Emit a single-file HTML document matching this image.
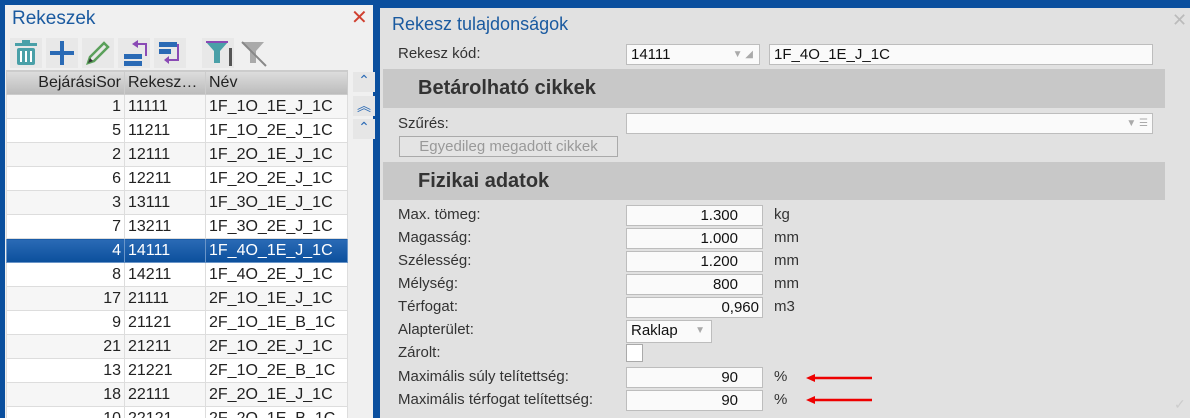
<!DOCTYPE html>
<html><head><meta charset="utf-8"><style>
*{margin:0;padding:0;box-sizing:border-box}
html,body{width:1190px;height:418px;overflow:hidden}
body{background:#0a4f9e;font-family:"Liberation Sans",sans-serif;position:relative}
.abs{position:absolute}
#left{left:5px;top:5px;width:368px;height:413px;background:#f0f0f0}
table{border-collapse:collapse;position:absolute;left:6px;top:70px;width:342px;font-size:16px;color:#222;table-layout:fixed}
td{height:24px;border:1px solid #ddd;padding:0 3px;white-space:nowrap;overflow:hidden}
tr:nth-child(even) td{background:#f6f6f6}
tr:nth-child(odd) td{background:#fff}
tr.h td{background:linear-gradient(#ddd,#bbb);border-color:#ccc}
tr.sel td{background:linear-gradient(#2a6ab5,#0b4f9c);color:#fff;border-color:#6a95c8}
td.n{text-align:right}
#dlg{left:380px;top:8px;width:810px;height:410px;background:#e1e1e1}
.band{position:absolute;left:3px;width:782px;background:#c8c8c8;font-weight:bold;font-size:20px;color:#333;padding-left:35px;font-family:"Liberation Sans",sans-serif}
.inp{position:absolute;background:#fafafa;border:1px solid #bdbdbd;font-size:15px;color:#111;height:21px;line-height:19px;padding:0 4px}
.lab{position:absolute;left:18px;font-size:15px;color:#333}
.unit{position:absolute;left:394px;font-size:15px;color:#333}
.sb{position:absolute;left:348px;width:22px;height:20px;background:#e6e6e6;color:#2a6ab5;font-size:14px;text-align:center}
</style></head><body>
<div class="abs" style="left:380px;top:0;width:810px;height:8px;background:#0a4f9e"></div>
<div id="left" class="abs">
<div class="abs" style="left:7px;top:3px;font-size:19px;color:#1a5aa0">Rekeszek</div>
<div class="abs" style="left:346px;top:0;font-size:20px;color:#d04030">✕</div>
<svg class="abs" style="left:5px;top:33px" width="260" height="30">
<rect x="0" y="0" width="32" height="30" fill="#e8e8e8"/><rect x="36" y="0" width="32" height="30" fill="#e8e8e8"/><rect x="72" y="0" width="32" height="30" fill="#e8e8e8"/><rect x="108" y="0" width="32" height="30" fill="#e8e8e8"/><rect x="144" y="0" width="32" height="30" fill="#e8e8e8"/><rect x="192" y="0" width="32" height="30" fill="#e8e8e8"/>
<g fill="#4aa0a8"><rect x="5" y="5" width="22" height="3"/><rect x="12" y="2" width="8" height="3"/><rect x="7" y="10" width="18" height="17" rx="2"/></g>
<g fill="#fff"><rect x="10" y="13" width="2" height="11"/><rect x="15" y="13" width="2" height="11"/><rect x="20" y="13" width="2" height="11"/></g>
<rect x="40" y="13" width="24" height="4" fill="#2a6ab5"/><rect x="50" y="3" width="4" height="24" fill="#2a6ab5"/>
<path d="M78 25 L80 19 L94 5 L98 9 L84 23 Z" fill="none" stroke="#5aa05a" stroke-width="2.5"/><path d="M78 25 L80 20 L83 23Z" fill="#333"/>
<rect x="114" y="16" width="18" height="5" fill="#2a6ab5"/><rect x="114" y="23" width="18" height="5" fill="#2a6ab5"/><path d="M128 6 h8 v12" stroke="#8a4ab5" stroke-width="2" fill="none"/><path d="M122 6 l6 -4 v8z" fill="#8a4ab5"/>
<rect x="149" y="4" width="18" height="5" fill="#2a6ab5"/><rect x="149" y="11" width="12" height="5" fill="#2a6ab5"/><path d="M168 6 v16 h-10" stroke="#8a4ab5" stroke-width="2" fill="none"/><path d="M154 22 l5 -4 v8z" fill="#8a4ab5"/>
<path d="M196 4 h22 l-8 9 v12 h-6 v-12z" fill="#4aa0a8"/><rect x="196" y="3" width="22" height="2" fill="#8a4ab5"/><rect x="219" y="10" width="3" height="18" fill="#555"/>
<path d="M232 4 h22 l-8 9 v12 h-6 v-12z" fill="#aaa"/><path d="M232 4 L256 28" stroke="#888" stroke-width="2"/>
</svg>
<div class="sb" style="top:67px">⌃</div><div class="sb" style="top:91px">︽</div><div class="sb" style="top:114px">⌃</div>
</div>
<table>
<colgroup><col style="width:118px"><col style="width:81px"><col></colgroup>
<tr class="h"><td class="n">BejárásiSor</td><td>Rekesz…</td><td>Név</td></tr>
<tr><td class="n">1</td><td>11111</td><td>1F_1O_1E_J_1C</td></tr>
<tr><td class="n">5</td><td>11211</td><td>1F_1O_2E_J_1C</td></tr>
<tr><td class="n">2</td><td>12111</td><td>1F_2O_1E_J_1C</td></tr>
<tr><td class="n">6</td><td>12211</td><td>1F_2O_2E_J_1C</td></tr>
<tr><td class="n">3</td><td>13111</td><td>1F_3O_1E_J_1C</td></tr>
<tr><td class="n">7</td><td>13211</td><td>1F_3O_2E_J_1C</td></tr>
<tr class="sel"><td class="n">4</td><td>14111</td><td>1F_4O_1E_J_1C</td></tr>
<tr><td class="n">8</td><td>14211</td><td>1F_4O_2E_J_1C</td></tr>
<tr><td class="n">17</td><td>21111</td><td>2F_1O_1E_J_1C</td></tr>
<tr><td class="n">9</td><td>21121</td><td>2F_1O_1E_B_1C</td></tr>
<tr><td class="n">21</td><td>21211</td><td>2F_1O_2E_J_1C</td></tr>
<tr><td class="n">13</td><td>21221</td><td>2F_1O_2E_B_1C</td></tr>
<tr><td class="n">18</td><td>22111</td><td>2F_2O_1E_J_1C</td></tr>
<tr><td class="n">10</td><td>22121</td><td>2F_2O_1E_B_1C</td></tr>
</table>
<div id="dlg" class="abs">
<div class="abs" style="left:12px;top:6px;font-size:18px;color:#1a5aa0">Rekesz tulajdonságok</div>
<div class="abs" style="left:792px;top:2px;font-size:18px;color:#bbb">✕</div>
<div class="lab" style="top:37px">Rekesz kód:</div>
<div class="inp" style="left:246px;top:36px;width:134px">14111<span style="position:absolute;right:6px;color:#aaa;font-size:10px">▼ ◢</span></div>
<div class="inp" style="left:389px;top:36px;width:384px">1F_4O_1E_J_1C</div>
<div class="band" style="top:61px;height:39px;line-height:39px">Betárolható cikkek</div>
<div class="lab" style="top:107px">Szűrés:</div>
<div class="inp" style="left:246px;top:105px;width:527px"><span style="position:absolute;right:4px;color:#aaa;font-size:10px">▼ ☰</span></div>
<div class="abs" style="left:19px;top:128px;width:219px;height:21px;border:1px solid #aaa;background:#e4e4e4;color:#999;font-size:15px;text-align:center;line-height:19px">Egyedileg megadott cikkek</div>
<div class="band" style="top:154px;height:38px;line-height:38px">Fizikai adatok</div>
<div class="lab" style="top:198px">Max. tömeg:</div><div class="inp" style="left:246px;top:197px;width:137px;text-align:right;padding-right:24px">1.300</div><div class="unit" style="top:198px">kg</div>
<div class="lab" style="top:221px">Magasság:</div><div class="inp" style="left:246px;top:220px;width:137px;text-align:right;padding-right:24px">1.000</div><div class="unit" style="top:221px">mm</div>
<div class="lab" style="top:244px">Szélesség:</div><div class="inp" style="left:246px;top:243px;width:137px;text-align:right;padding-right:24px">1.200</div><div class="unit" style="top:244px">mm</div>
<div class="lab" style="top:267px">Mélység:</div><div class="inp" style="left:246px;top:266px;width:137px;text-align:right;padding-right:24px">800</div><div class="unit" style="top:267px">mm</div>
<div class="lab" style="top:290px">Térfogat:</div><div class="inp" style="left:246px;top:289px;width:137px;text-align:right;padding-right:3px">0,960</div><div class="unit" style="top:290px">m3</div>
<div class="lab" style="top:313px">Alapterület:</div><div class="inp" style="left:246px;top:312px;width:86px;height:23px">Raklap<span style="position:absolute;right:6px;color:#aaa;font-size:10px">▼</span></div>
<div class="lab" style="top:336px">Zárolt:</div><div class="abs" style="left:246px;top:336px;width:17px;height:18px;background:#fff;border:1px solid #aaa"></div>
<div class="lab" style="top:360px">Maximális súly telítettség:</div><div class="inp" style="left:246px;top:359px;width:137px;text-align:right;padding-right:24px">90</div><div class="unit" style="top:360px">%</div>
<div class="lab" style="top:383px">Maximális térfogat telítettség:</div><div class="inp" style="left:246px;top:382px;width:137px;text-align:right;padding-right:24px">90</div><div class="unit" style="top:383px">%</div>
<svg class="abs" style="left:426px;top:362px" width="70" height="40"><path d="M4 8 H66 M4 30 H66" stroke="#e00" stroke-width="2.5"/><path d="M0 8 l9 -4 v8z M0 30 l9 -4 v8z" fill="#e00"/></svg>
<div class="abs" style="left:794px;top:388px;color:#ccc;font-size:14px">✓</div>
</div>
</body></html>
